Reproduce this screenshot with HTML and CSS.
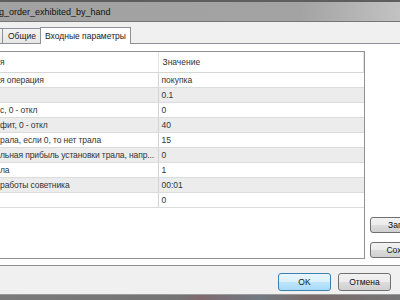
FILE: index.html
```html
<!DOCTYPE html>
<html>
<head>
<meta charset="utf-8">
<title>g_order_exhibited_by_hand</title>
<link rel="stylesheet" href="styles.css">
</head>
<body>
	<div class="titlebar"><span class="title">g_order_exhibited_by_hand</span></div>
	<div class="tabs">
		<div class="tab cut"></div>
		<div class="tab">Общие</div>
		<div class="tab active">Входные параметры</div>
	</div>
	<div class="panel">
		<div class="list">
			<table class="params">
				<thead>
					<tr><th class="name">я</th><th class="value">Значение</th></tr>
				</thead>
				<tbody>
					<tr><td class="name">я операция</td><td class="value">покупка</td></tr>
					<tr><td class="name"></td><td class="value">0.1</td></tr>
					<tr><td class="name">с, 0 - откл</td><td class="value">0</td></tr>
					<tr><td class="name">фит, 0 - откл</td><td class="value">40</td></tr>
					<tr><td class="name">рала, если 0, то нет трала</td><td class="value">15</td></tr>
					<tr><td class="name">льная прибыль установки трала, напр...</td><td class="value">0</td></tr>
					<tr><td class="name">ла</td><td class="value">1</td></tr>
					<tr><td class="name">работы советника</td><td class="value">00:01</td></tr>
					<tr><td class="name"></td><td class="value">0</td></tr>
				</tbody>
			</table>
		</div>
		<div class="side">
			<button class="btn side-btn">Загрузить</button>
			<button class="btn side-btn">Сохранить</button>
		</div>
	</div>
	<div class="footer">
		<button class="btn default">OK</button>
		<button class="btn">Отмена</button>
	</div>
	<div class="edge"></div>
</body>
</html>
```

FILE: styles.css
```css
* { margin: 0; padding: 0; box-sizing: border-box; }
body { width: 400px; height: 300px; overflow: hidden; background: #f0f0f0; font-family: "Liberation Sans", Arial, sans-serif; font-size: 8.5px; color: #1e1e1e; }

.titlebar { height: 22px; display: flex; align-items: center; border-top: 2px solid #5e5e5e; border-bottom: 1px solid #767676; background: linear-gradient(to right, #a2a2a2 0, #a3a3a3 300px, #c2c2c2 400px); }
.title { font-size: 9px; color: #111; margin-left: -1px; padding-top: 1px; }

.tabs { height: 21px; display: flex; align-items: flex-end; }
.tab { height: 15px; padding: 0 4px 0 5px; border: 1px solid #8d9096; border-bottom: none; border-left: none; background: linear-gradient(#f3f3f3, #e6e6e6); display: flex; align-items: center; color: #222; }
.tab.cut { width: 3px; padding: 0; }
.tab.active { height: 17px; padding: 0 4px 0 4px; margin-bottom: -1px; border-left: 1px solid #8d9096; margin-left: -1px; background: #fff; position: relative; z-index: 1; }

.panel { height: 223px; display: flex; background: #fff; border-top: 1px solid #8d9096; border-bottom: 1px solid #8d9096; padding: 7px 0 6px 0; }
.list { width: 367px; flex-shrink: 0; margin-left: -2px; border: 1px solid #8f9195; background: #fff; }
.params { border-collapse: collapse; width: 365px; table-layout: fixed; }
.params th { height: 20px; font-weight: normal; text-align: left; color: #333; border-bottom: 1px solid #d6d6d6; }
.params th.name { width: 159px; border-right: 1px solid #e3e3e3; padding-left: 1px; }
.params th.value { border-right: 1px solid #e3e3e3; padding-left: 4px; }
.params td { height: 15px; padding: 0; color: #333; border-bottom: 1px solid #dcdcdc; white-space: nowrap; overflow: hidden; }
.params td.name { border-right: 1px solid #d2d2d2; padding-left: 1px; letter-spacing: -0.1px; }
.params td.value { padding-left: 3px; }
.params tbody tr:nth-child(even) td { background: #ececec; }

.side { display: flex; flex-direction: column; justify-content: flex-end; gap: 9px; margin-left: 5px; padding-bottom: 1px; }
.btn { font-family: "Liberation Sans", Arial, sans-serif; font-size: 8.5px; color: #111; border: 1px solid #707070; border-radius: 3px; background: linear-gradient(#f2f2f2 0, #ebebeb 50%, #dddddd 51%, #cfcfcf 100%); }
.side-btn { width: 75px; height: 16px; flex-shrink: 0; }

.footer { height: 28px; display: flex; justify-content: flex-end; gap: 7px; padding: 7px 9px 0 0; }
.footer .btn { width: 53px; height: 18px; }
.btn.default { border-color: #3c7fb1; background: linear-gradient(#eaf6fd 0, #d9f0fc 50%, #bee6fd 51%, #a7d9f5 100%); }

.edge { height: 6px; background: linear-gradient(to right, #7a7a7a 0, #747474 180px, #806a70 200px, #737a82 260px, #7a6a6a 310px, #767676 400px); border-top: 1px solid #9a9a9a; }
```
